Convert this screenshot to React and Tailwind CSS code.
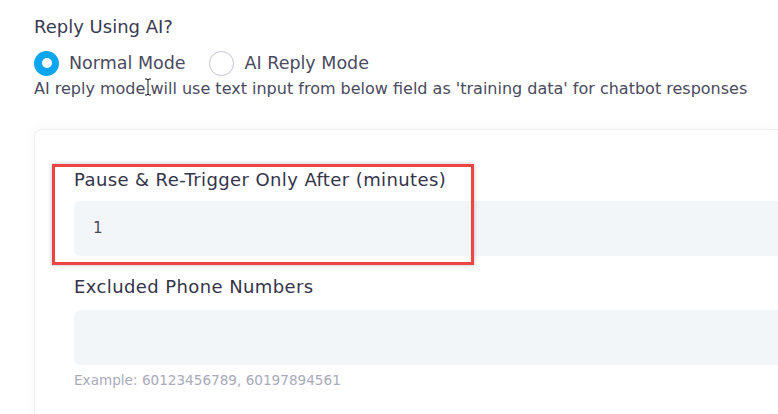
export default function App() {
  return (
    <div className="relative w-[778px] h-[414px] overflow-hidden bg-white font-['DejaVu_Sans',sans-serif] text-[#3a3a50]">
      <div className="pl-[34px] pt-[15px]">
        <h3 className="text-[18px] leading-[24px] font-medium">Reply Using AI?</h3>

        {/* mode radios */}
        <div className="mt-[11px] flex items-center h-[26px]">
          <label className="flex items-center gap-[10px]">
            <span className="w-[25px] h-[25px] rounded-full bg-[#0ea5f0] flex items-center justify-center">
              <span className="w-[10px] h-[10px] rounded-full bg-white" />
            </span>
            <span className="text-[17.5px] text-[#4a4a5e]">Normal Mode</span>
          </label>
          <label className="flex items-center gap-[11px] ml-[23px]">
            <span className="w-[25px] h-[25px] rounded-full border border-[#c4c4d2] bg-white" />
            <span className="text-[17.5px] text-[#4a4a5e]">AI Reply Mode</span>
          </label>
        </div>
        <p className="mt-[2px] text-[16px] leading-[22px] text-[#4a4a5e] whitespace-nowrap">
          AI reply mode
          <span className="relative">
            <svg className="absolute -left-[1px] -top-[1px]" width="8" height="18" viewBox="0 0 8 18">
              <path d="M1 1h2l1 1 1-1h2M4 2v14M1 17h2l1-1 1 1h2" fill="none" stroke="#111" strokeWidth="1" />
            </svg>
          </span>{" "}
          will use text input from below field as 'training data' for chatbot responses
        </p>

        {/* settings card */}
        <div className="mt-[29px] rounded-tl-[8px] border border-[#eceef2] border-r-0 shadow-[0_-2px_14px_rgba(0,0,0,0.035)] pl-[39px] pt-[37px]">
          <div>
            <p className="text-[18px] leading-[26px] tracking-[0.4px] text-[#34344a]">
              Pause &amp; Re-Trigger Only After (minutes)
            </p>
            <div className="mt-[8px] h-[55px] rounded-l-[6px] bg-[#f3f6f9] flex items-center pl-[19px] text-[15px] text-[#4a4a5e]">
              1
            </div>
          </div>
          <div className="mt-[18px]">
            <p className="text-[18px] leading-[26px] tracking-[0.4px] text-[#34344a]">Excluded Phone Numbers</p>
            <div className="mt-[10px] h-[55px] rounded-l-[6px] bg-[#f3f6f9]" />
            <p className="mt-[5px] text-[13.6px] leading-[20px] text-[#a9abbb]">Example: 60123456789, 60197894561</p>
          </div>
          <div className="h-[40px]" />
        </div>
      </div>

      {/* annotation highlight */}
      <div className="absolute left-[52px] top-[164px] w-[422px] h-[101px] border-[3px] border-[#ef4444] shadow-[0_0_4px_rgba(0,0,0,0.25)]" />
    </div>
  );
}
